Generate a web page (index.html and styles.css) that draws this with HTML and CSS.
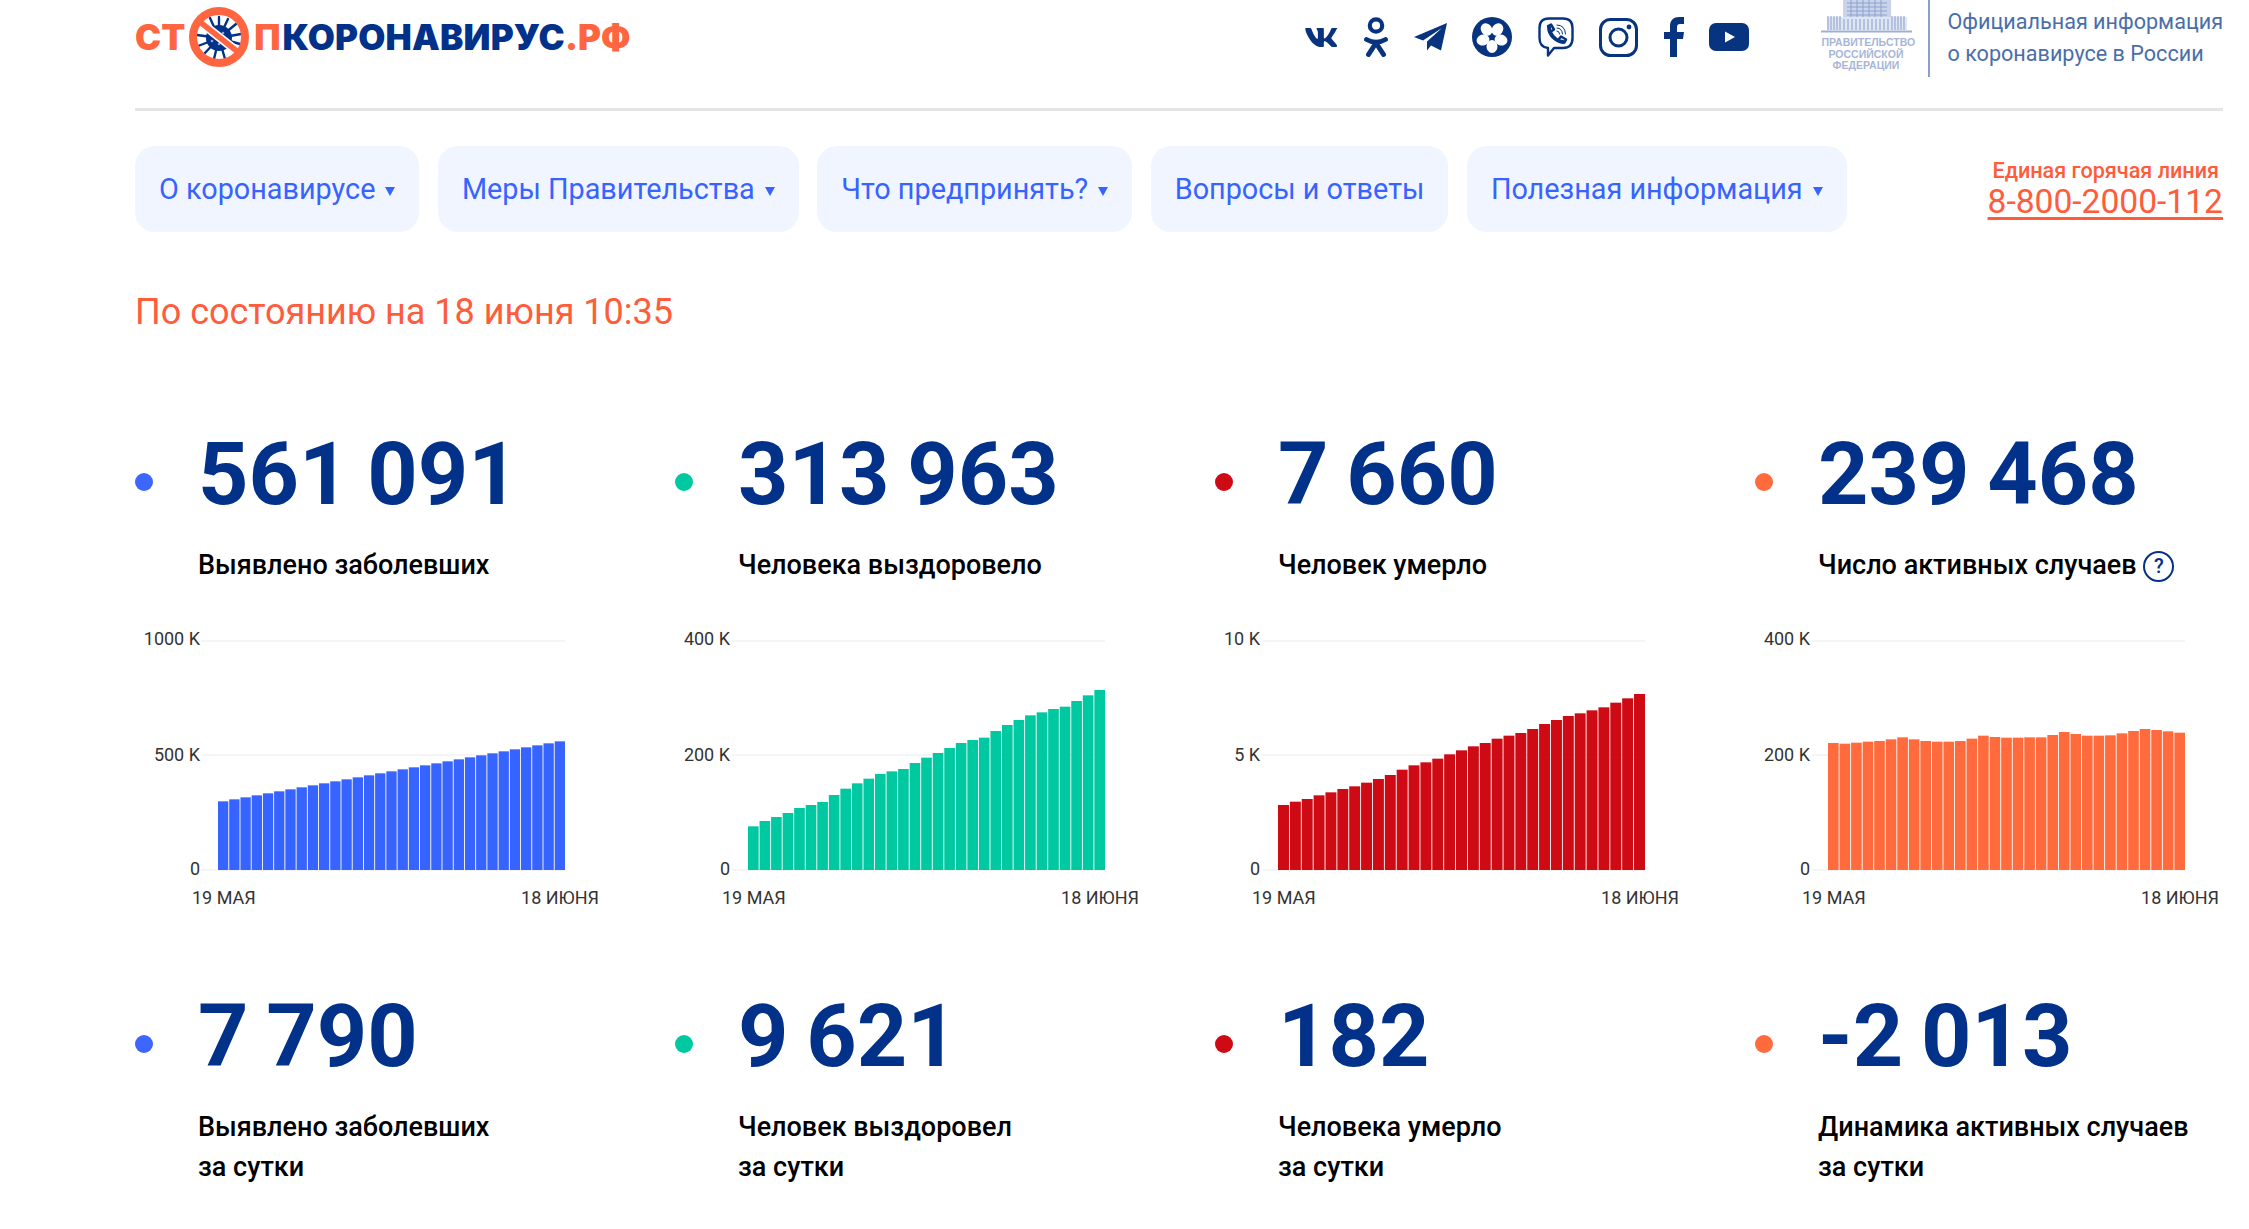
FILE: index.html
```html
<!DOCTYPE html>
<html lang="ru">
<head>
<meta charset="utf-8">
<title>Стопкоронавирус.рф</title>
<link rel="stylesheet" href="styles.css">
</head>
<body>
<div class="page">
  <header class="header">
    <a class="logo">
      <span class="logo-o">СТ</span>
      <svg class="logo-mark" viewBox="0 0 60 60" width="60" height="60">
        <g stroke="#02318a" stroke-width="2.4" stroke-linecap="round">
          <path d="M30 31L30 10M30 31L39 12M30 31L47 17M30 31L52 27M30 31L51 37M30 31L45 46M30 31L36 52M30 31L25 52M30 31L15 47M30 31L9 39M30 31L8 28M30 31L13 18M30 31L21 11"/>
        </g>
        <circle cx="30" cy="31" r="13" fill="#02318a"/>
        <g fill="#8fa6d4"><circle cx="26" cy="27" r="1.3"/><circle cx="34" cy="26" r="1.3"/><circle cx="37" cy="33" r="1.3"/><circle cx="30" cy="37" r="1.3"/><circle cx="23" cy="34" r="1.3"/></g>
        <path d="M11 15L49 45" stroke="#fff" stroke-width="9"/>
        <path d="M11 15L49 45" stroke="#ff6540" stroke-width="5.5"/>
        <circle cx="30" cy="30" r="26" fill="none" stroke="#ff6540" stroke-width="8"/>
      </svg>
      <span class="logo-o logo-p">П</span><span class="logo-n">КОРОНАВИРУС</span><span class="logo-o">.РФ</span>
    </a>
    <div class="social">
      <svg width="34" height="21" viewBox="0 80 576 352" preserveAspectRatio="none"><path d="M545 117.700c3.700-12.500 0-21.700-17.800-21.700h-58.900c-15 0-21.900 7.900-25.600 16.700-5.600 15.400-39.500 91.600-84.200 139.600-14.700 14.900-21.200 19.700-29.200 19.700-4 0-9.900-4.800-9.900-17.300V117.700c0-15-4.200-21.700-16.600-21.700h-92.600c-9.400 0-15 7-15 13.500 0 14.200 21.200 17.500 23.400 57.500v87.100c0 19.100-3.400 22.600-10.900 22.600-20 0-68.600-73.400-97.400-157.400-5.800-16.300-11.500-22.900-26.600-22.900H25c-16.800 0-20.200 7.900-20.200 16.700 0 15.600 20 93.100 93.100 195.500C146.600 376.200 215.400 416 277.800 416c37.500 0 42.100-8.400 42.100-22.900 0-66.800-3.400-73.100 15.400-73.100 8.700 0 23.700 4.400 58.700 38.100C434 398.100 440.600 416 463 416h58.900c16.800 0 25.300-8.400 20.400-25-11.200-34.900-86.900-106.700-90.300-111.500-8.700-11.200-6.200-16.200 0-26.200.1-.1 72-101.300 79.400-135.600z"/></svg>
      <svg width="24" height="40" viewBox="0 0 24 40"><g class="ico-line"><circle cx="12" cy="8.500" r="6.200" stroke-width="4.200"/><path d="M2.500 22.500Q12 28 21.500 22.500" stroke-width="4.800"/><path d="M12 26L4.500 37.500M12 26L19.500 37.500" stroke-width="5"/></g></svg>
      <svg width="33" height="28" viewBox="0 0 33 28"><path d="M0 14L33 0L27 27.500L17 22.500L13 27.500L13 18.500L28 5L9 17.500Z"/></svg>
      <svg width="40" height="40" viewBox="0 0 40 40"><circle cx="20" cy="20" r="20"/><g fill="#fff"><ellipse cx="20" cy="29.500" rx="5.500" ry="6.500"/><ellipse cx="11" cy="23" rx="6.500" ry="5.500" transform="rotate(-18 11 23)"/><ellipse cx="14.500" cy="12.500" rx="5.500" ry="6.500" transform="rotate(-36 14.500 12.500)"/><ellipse cx="25.500" cy="12.500" rx="5.500" ry="6.500" transform="rotate(36 25.500 12.500)"/><ellipse cx="29" cy="23" rx="6.500" ry="5.500" transform="rotate(18 29 23)"/></g></svg>
      <svg width="36" height="40" viewBox="0 0 36 40"><g class="ico-line"><path d="M11 1.500H25Q34.500 1.500 34.500 11V21Q34.500 31 25 31H16L10 38.500V31Q1.500 30 1.500 21V11Q1.500 1.500 11 1.500Z" stroke-width="2.400"/><path d="M11 10C11 17 17 24 25 25" stroke-width="4"/><path d="M10 9L13 7.500L16 12.500L13 14.500M21 22L23 19.500L28 22.500L26.500 25.500" stroke-width="2.500"/><path d="M19 8Q27 8 27.500 17M19 11Q24 11 24.500 17M19 14Q21.500 14 21.500 17" stroke-width="1"/></g></svg>
      <svg width="39" height="39" viewBox="0 0 39 39"><g class="ico-line"><rect x="1.500" y="1.500" width="36" height="36" rx="10" stroke-width="3"/><circle cx="19.500" cy="19.500" r="8.500" stroke-width="3"/></g><circle cx="30" cy="9" r="2.400"/></svg>
      <svg width="20" height="40" viewBox="0 0 20 40"><path d="M6 40V22H0V15H6V9C6 3 10 0 15 0H20V7H16C14 7 13 8 13 10V15H20L19 22H13V40Z"/></svg>
      <svg width="40" height="28" viewBox="0 0 40 28"><rect width="40" height="28" rx="7"/><path d="M16 8.500L26 14L16 19.500Z" fill="#fff"/></svg>
    </div>
    <div class="gov">
      <svg class="gov-mark" width="91" height="33" viewBox="0 0 91 33">
        <rect x="22" y="0" width="48" height="18" fill="#c9d4ea"/>
        <path d="M26 3H66M26 7H66M26 11H66M26 15H66M30 0V18M36 0V18M42 0V18M48 0V18M54 0V18M60 0V18" stroke="#8ea2cc" stroke-width="1"/>
        <rect x="6" y="17" width="80" height="13" fill="#dfe6f3"/>
        <path d="M7 16V30M10 16V30M13 16V30M16 16V30M19 16V30M23 19V30M27 19V30M31 19V30M35 19V30M39 19V30M43 19V30M47 19V30M51 19V30M55 19V30M59 19V30M63 19V30M67 19V30M71 16V30M74 16V30M77 16V30M80 16V30M83 16V30" stroke="#9db0d4" stroke-width="1.300"/>
        <path d="M0 31.500H91" stroke="#9db0d4" stroke-width="2"/>
      </svg>
      <div class="gov-name">ПРАВИТЕЛЬСТВО<br>РОССИЙСКОЙ<br>ФЕДЕРАЦИИ</div>
    </div>
    <div class="official">Официальная информация<br>о коронавирусе в России</div>
  </header>

  <nav class="navbar">
    <ul class="menu">
      <li class="menu-item has-sub">О коронавирусе</li>
      <li class="menu-item has-sub">Меры Правительства</li>
      <li class="menu-item has-sub">Что предпринять?</li>
      <li class="menu-item">Вопросы и ответы</li>
      <li class="menu-item has-sub">Полезная информация</li>
    </ul>
    <div class="hotline">
      <div class="hotline-label">Единая горячая линия</div>
      <a class="hotline-phone">8-800-2000-112</a>
    </div>
  </nav>

  <h2 class="status">По состоянию на 18 июня 10:35</h2>

  <section class="stats">
    <article class="stat">
      <span class="dot blue"></span>
      <div class="num">561 091</div>
      <div class="label">Выявлено заболевших</div>
      <svg class="chart" width="480" height="300" viewBox="0 0 480 300">
        <path class="grid" d="M66 21H430M66 135H430M66 250H430"/>
        <g class="bars" data-color="#3763ff" data-left="83" data-tops="545,539,533,527,521,515,509,503,497,491,485,479,473,467,461,455,449,443,437,431,425,419,413,407,401,395,389,383,377,371,365"></g>
        <text class="axis" x="65" y="25" text-anchor="end">1000 K</text>
        <text class="axis" x="65" y="141" text-anchor="end">500 K</text>
        <text class="axis" x="65" y="255" text-anchor="end">0</text>
        <text class="axis" x="57" y="284">19 МАЯ</text>
        <text class="axis" x="464" y="284" text-anchor="end">18 ИЮНЯ</text>
      </svg>
    </article>
    <article class="stat">
      <span class="dot green"></span>
      <div class="num">313 963</div>
      <div class="label">Человека выздоровело</div>
      <svg class="chart" width="480" height="300" viewBox="0 0 480 300">
        <path class="grid" d="M57 21H430M57 135H430M57 250H430"/>
        <g class="bars" data-color="#00c8a0" data-left="73" data-tops="620,604,592,580,565,556,547,526,507,491,477,463,455,448,430,414,400,385,370,361,354,334,316,301,287,278,268,261,244,227,211"></g>
        <text class="axis" x="55" y="25" text-anchor="end">400 K</text>
        <text class="axis" x="55" y="141" text-anchor="end">200 K</text>
        <text class="axis" x="55" y="255" text-anchor="end">0</text>
        <text class="axis" x="47" y="284">19 МАЯ</text>
        <text class="axis" x="464" y="284" text-anchor="end">18 ИЮНЯ</text>
      </svg>
    </article>
    <article class="stat">
      <span class="dot red"></span>
      <div class="num">7 660</div>
      <div class="label">Человек умерло</div>
      <svg class="chart" width="480" height="300" viewBox="0 0 480 300">
        <path class="grid" d="M47 21H430M47 135H430M47 250H430"/>
        <g class="bars" data-color="#ce0a14" data-left="63" data-tops="556,546,538,527,518,508,500,489,478,466,450,437,428,417,404,392,380,370,357,348,340,328,313,301,289,281,272,263,249,236,223"></g>
        <text class="axis" x="45" y="25" text-anchor="end">10 K</text>
        <text class="axis" x="45" y="141" text-anchor="end">5 K</text>
        <text class="axis" x="45" y="255" text-anchor="end">0</text>
        <text class="axis" x="37" y="284">19 МАЯ</text>
        <text class="axis" x="464" y="284" text-anchor="end">18 ИЮНЯ</text>
      </svg>
    </article>
    <article class="stat">
      <span class="dot orange"></span>
      <div class="num">239 468</div>
      <div class="label">Число активных случаев <span class="help">?</span></div>
      <svg class="chart" width="468" height="300" viewBox="0 0 468 300">
        <path class="grid" d="M57 21H430M57 135H430M57 250H430"/>
        <g class="bars" data-color="#ff6b3c" data-left="73" data-tops="370,372,369,366,364,359,353,359,364,366,366,364,357,348,352,354,354,353,353,346,337,343,348,348,347,341,334,328,331,335,339"></g>
        <text class="axis" x="55" y="25" text-anchor="end">400 K</text>
        <text class="axis" x="55" y="141" text-anchor="end">200 K</text>
        <text class="axis" x="55" y="255" text-anchor="end">0</text>
        <text class="axis" x="47" y="284">19 МАЯ</text>
        <text class="axis" x="464" y="284" text-anchor="end">18 ИЮНЯ</text>
      </svg>
    </article>

    <article class="stat">
      <span class="dot blue"></span>
      <div class="num">7 790</div>
      <div class="label">Выявлено заболевших<br>за сутки</div>
    </article>
    <article class="stat">
      <span class="dot green"></span>
      <div class="num">9 621</div>
      <div class="label">Человек выздоровел<br>за сутки</div>
    </article>
    <article class="stat">
      <span class="dot red"></span>
      <div class="num">182</div>
      <div class="label">Человека умерло<br>за сутки</div>
    </article>
    <article class="stat">
      <span class="dot orange"></span>
      <div class="num">-2 013</div>
      <div class="label">Динамика активных случаев<br>за сутки</div>
    </article>
  </section>
</div>
<script src="app.js"></script>
</body>
</html>
```

FILE: styles.css
```css
* { box-sizing: border-box; }
html, body { margin: 0; padding: 0; background: #fff; }
body { font-family: Roboto, "Noto Sans", sans-serif; color: #000; overflow: hidden; height: 1229px; }

.page { width: 2088px; margin-left: 135px; }

/* header */
.header { display: flex; align-items: flex-start; height: 111px; border-bottom: 3px solid #e5e5e5; }
.logo { display: flex; align-items: center; height: 60px; margin-top: 7px; font-family: Inter, Roboto, sans-serif; font-weight: 900; font-size: 35px; line-height: 60px; white-space: nowrap; }
.logo-o { color: #ff6540; }
.logo-n { color: #02318a; letter-spacing: 0.2px; }
.logo-p { margin-right: 2px; }
.logo-mark { margin: 0 5px 0 4px; flex: none; }

.social { display: flex; align-items: center; gap: 25.500px; height: 40px; margin: 17px 0 0 auto; }
.social svg { display: block; fill: #07337f; flex: none; }
.ico-line { fill: none; stroke: #07337f; stroke-linecap: round; stroke-linejoin: round; }

.gov { width: 109px; height: 77px; margin-left: 72px; padding-right: 18px; border-right: 2px solid #8ba0c8; flex: none; }
.gov-mark { display: block; }
.gov-name { margin-top: 4px; text-align: center; font-family: "Liberation Sans", sans-serif; font-weight: 700; font-size: 10.500px; line-height: 11.500px; color: #a7b6d8; }
.official { margin-left: 17px; padding-top: 6px; font-size: 21.600px; line-height: 32px; color: #4a6ea9; white-space: nowrap; }

/* nav */
.navbar { display: flex; justify-content: space-between; align-items: flex-start; margin-top: 35px; }
.menu { display: flex; gap: 18.500px; margin: 0; padding: 0; list-style: none; }
.menu-item { display: flex; align-items: center; height: 86px; padding: 0 24px; background: #f1f5ff; border-radius: 20px; color: #3763ff; font-size: 28.800px; white-space: nowrap; }
.has-sub::after { content: ""; margin-left: 10px; margin-top: 4px; border-style: solid; border-width: 9px 5px 0; border-color: #3763ff transparent transparent; }

.hotline { margin-top: 12px; text-align: right; color: #ff5c3c; white-space: nowrap; }
.hotline-label { padding-right: 4px; font-size: 21.600px; line-height: 26px; font-weight: 500; }
.hotline-phone { display: block; font-size: 33.600px; line-height: 36px; text-decoration: underline; text-decoration-thickness: 3px; text-underline-offset: 4px; }

.status { margin: 60px 0 92px; font-size: 36px; line-height: 40px; font-weight: 400; color: #ff5c3c; }

/* stats */
.stats { display: grid; grid-template-columns: 540px 540px 540px 468px; row-gap: 66px; }
.stat { display: grid; grid-template-columns: 18px 1fr; column-gap: 45px; align-content: start; }
.dot { width: 18px; height: 18px; margin-top: 49px; border-radius: 50%; }
.blue { background: #3d66ff; }
.green { background: #00c8a0; }
.red { background: #ce0a14; }
.orange { background: #ff6b3c; }
.num { font-size: 88px; line-height: 100px; font-weight: 700; word-spacing: -4px; color: #02318a; white-space: nowrap; }
.label { grid-column: 2; margin-top: 21px; font-size: 27px; line-height: 40px; font-weight: 500; white-space: nowrap; }
.help { display: inline-flex; align-items: center; justify-content: center; width: 31px; height: 31px; border: 2px solid #02318a; border-radius: 50%; color: #02318a; font-size: 20px; line-height: 1; vertical-align: 1px; }

.chart { grid-column: 1 / -1; display: block; margin-top: 35px; }
.grid { stroke: #f2f2f2; stroke-width: 1.500; fill: none; }
.axis { font-family: Roboto, sans-serif; font-size: 18px; fill: #333; }
```

FILE: app.js
```js
// Draw the 31 daily bars of every chart from the tops listed on its group.
var SVG_NS = "http://www.w3.org/2000/svg";
var RIGHT = 430, BASE = 250, TOP_ZERO = 751, TOP_SCALE = 3, SEAM = 0.9;
document.querySelectorAll(".bars").forEach(function (group) {
  var tops = group.dataset.tops.split(",").map(Number);
  var left = Number(group.dataset.left);
  var pitch = (RIGHT - left + SEAM) / tops.length;
  tops.forEach(function (top, i) {
    var height = (TOP_ZERO - top) / TOP_SCALE;
    var rect = document.createElementNS(SVG_NS, "rect");
    rect.setAttribute("x", left + i * pitch);
    rect.setAttribute("y", BASE - height);
    rect.setAttribute("width", pitch - SEAM);
    rect.setAttribute("height", height);
    rect.setAttribute("fill", group.dataset.color);
    group.appendChild(rect);
  });
});
```
